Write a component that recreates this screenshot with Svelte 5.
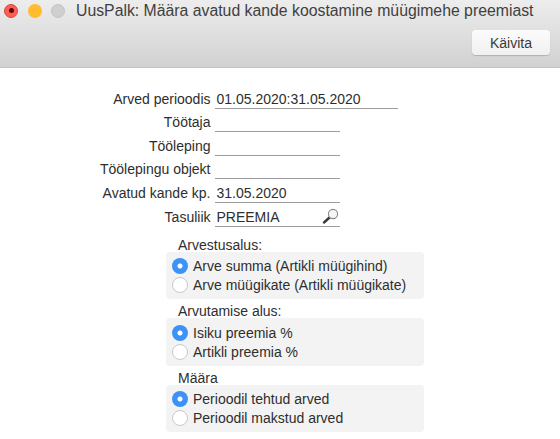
<script>
  const fields = [
    { label: "Arved perioodis", value: "01.05.2020:31.05.2020", wide: true },
    { label: "Töötaja", value: "" },
    { label: "Tööleping", value: "" },
    { label: "Töölepingu objekt", value: "" },
    { label: "Avatud kande kp.", value: "31.05.2020" },
    { label: "Tasuliik", value: "PREEMIA", search: true }
  ];
  const groups = [
    { legend: "Arvestusalus:", options: ["Arve summa (Artikli müügihind)", "Arve müügikate (Artikli müügikate)"] },
    { legend: "Arvutamise alus:", options: ["Isiku preemia %", "Artikli preemia %"] },
    { legend: "Määra", options: ["Perioodil tehtud arved", "Perioodil makstud arved"] }
  ];
</script>

<div class="window">
  <header>
    <div class="titlebar">
      <span class="light red"><i></i></span>
      <span class="light yellow"></span>
      <span class="light grey"></span>
      <h1>UusPalk: Määra avatud kande koostamine müügimehe preemiast</h1>
    </div>
    <div class="tools"><button>Käivita</button></div>
  </header>

  <main>
    <div class="fields">
      {#each fields as f}
        <div class="row">
          <span class="label">{f.label}</span>
          <div class="field" class:wide={f.wide}>
            <span>{f.value}</span>
            {#if f.search}
              <svg width="18" height="16" viewBox="0 0 18 16">
                <path d="M2 14.5 L7.5 9.5" stroke="#3a3a3a" stroke-width="2.4" stroke-linecap="round" />
                <circle cx="11" cy="6" r="4.6" fill="#f4f6f8" stroke="#8a8a8a" stroke-width="1.1" />
              </svg>
            {/if}
          </div>
        </div>
      {/each}
    </div>

    {#each groups as g}
      <section>
        <div class="legend">{g.legend}</div>
        <div class="box">
          {#each g.options as o, i}
            <div class="opt">
              <span class="radio" class:on={i === 0}></span>
              <span>{o}</span>
            </div>
          {/each}
        </div>
      </section>
    {/each}
  </main>
</div>

<style>
  :global(body) { background: #fff; }
  .window { width: 560px; height: 439px; overflow: hidden; font-family: "Liberation Sans", Arial, sans-serif; font-size: 14px; color: #2e2e2e; }

  header { height: 68px; box-sizing: border-box; border-bottom: 1px solid #c4c4c4; background: linear-gradient(#eeedee, #d2d1d2); }
  .titlebar { display: flex; align-items: center; height: 21px; padding-left: 4px; }
  .light { display: flex; align-items: center; justify-content: center; width: 14px; height: 14px; margin-right: 9.5px; border-radius: 50%; box-sizing: border-box; }
  .red { background: #fc5f57; border: 1px solid #e0443e; }
  .red i { width: 5px; height: 5px; border-radius: 50%; background: #5c0a06; }
  .yellow { background: #febc2e; }
  .grey { background: #cfcfcf; border: 1px solid #c4c4c4; margin-right: 11px; }
  h1 { margin: 0; font-size: 15.8px; font-weight: 400; color: #3f3f3f; white-space: nowrap; }
  .tools { display: flex; justify-content: flex-end; padding: 9px 10px 0 0; }
  button { width: 78px; height: 25px; padding: 0; border: 0; border-radius: 4px; background: linear-gradient(#fcfcfc, #f0f0f0); box-shadow: 0 1px 1px rgba(0, 0, 0, 0.18); font: inherit; color: #3a3a3a; }

  main { padding-top: 17px; }
  .fields { display: flex; flex-direction: column; }
  .row { display: flex; align-items: flex-end; height: 23.6px; }
  .label { width: 210.5px; text-align: right; line-height: 18px; padding-bottom: 1px; }
  .field { display: flex; justify-content: space-between; align-items: center; box-sizing: border-box; width: 125.5px; height: 19px; margin-left: 4px; padding-left: 2px; border-bottom: 1px solid #9c9c9c; line-height: 18px; }
  .field.wide { width: 183.5px; }
  svg { margin-bottom: 1px; }

  section { margin-left: 166px; width: 258px; }
  .fields + section { margin-top: 11px; }
  .legend { height: 14px; line-height: 14px; padding-left: 12px; }
  .box { box-sizing: border-box; height: 47.5px; margin-bottom: 5px; padding: 5px 6px; border-radius: 4px; background: #f3f3f3; }
  .opt { display: flex; align-items: center; height: 19px; gap: 5px; }
  .radio { flex: none; box-sizing: border-box; width: 16px; height: 16px; border-radius: 50%; background: #fff; border: 1px solid #c9c9c9; }
  .radio.on { border: 0; background: radial-gradient(circle, #fff 0 2px, #3d92f7 3px); }
</style>
